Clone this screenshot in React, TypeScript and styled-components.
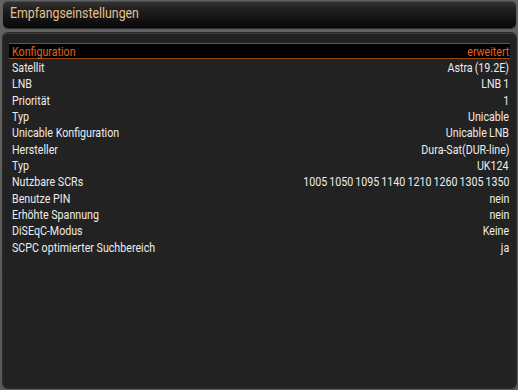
import styled, { createGlobalStyle } from 'styled-components';

const Global = createGlobalStyle`
  html, body {
    margin: 0;
    padding: 0;
    background: #5a5a5a;
  }
  body {
    width: 518px;
    height: 390px;
    overflow: hidden;
    font-family: Roboto, "Liberation Sans", sans-serif;
  }
`;

const Screen = styled.div`
  width: 518px;
  height: 390px;
  box-sizing: border-box;
  padding: 1px 2px 2px 3px;
  display: flex;
  flex-direction: column;
  gap: 5px;
  background: linear-gradient(#626262, #585858);
`;

const TitleBar = styled.div`
  height: 27px;
  border-radius: 5px;
  background: linear-gradient(#353535 0%, #1e1e1e 35%, #080808 100%);
  box-shadow: inset 0 1px 0 #4a4a4a, 0 1px 1px #2a2a2a;
  display: flex;
  align-items: center;
  padding: 0 7px 3px 7px;
  box-sizing: border-box;
`;

const Title = styled.span`
  color: #e9c08c;
  font-size: 14px;
  display: inline-block;
  transform: scaleX(0.88);
  transform-origin: left center;
`;

const Panel = styled.div`
  flex: 1;
  border-radius: 5px;
  background: #222222;
  box-shadow: inset 0 1px 0 #3a3a3a, 0 0 0 1px #2c2c2c;
  padding: 10px 6px 0 6px;
  display: flex;
  flex-direction: column;
`;

const Row = styled.div<{ $active?: boolean }>`
  height: 16.33px;
  box-sizing: border-box;
  display: flex;
  justify-content: space-between;
  align-items: center;
  padding: 0 1px 0 3px;
  font-size: 13px;
  color: ${(p) => (p.$active ? '#e2621c' : '#ececec')};
  background: ${(p) => (p.$active ? '#000000' : 'transparent')};
  border-top: 1px solid ${(p) => (p.$active ? '#9a4610' : 'transparent')};
  border-bottom: 1px solid ${(p) => (p.$active ? '#9a4610' : 'transparent')};
`;

const Label = styled.span`
  white-space: nowrap;
  display: inline-block;
  transform: scaleX(0.82);
  transform-origin: left center;
`;

const Value = styled.span`
  white-space: nowrap;
  word-spacing: -0.7px;
  display: inline-block;
  transform: scaleX(0.82);
  transform-origin: right center;
`;

const rows: [string, string][] = [
  ['Konfiguration', 'erweitert'],
  ['Satellit', 'Astra (19.2E)'],
  ['LNB', 'LNB 1'],
  ['Priorität', '1'],
  ['Typ', 'Unicable'],
  ['Unicable Konfiguration', 'Unicable LNB'],
  ['Hersteller', 'Dura-Sat(DUR-line)'],
  ['Typ', 'UK124'],
  ['Nutzbare SCRs', '1005 1050 1095 1140 1210 1260 1305 1350'],
  ['Benutze PIN', 'nein'],
  ['Erhöhte Spannung', 'nein'],
  ['DiSEqC-Modus', 'Keine'],
  ['SCPC optimierter Suchbereich', 'ja'],
];

export default function App() {
  return (
    <>
      <Global />
      <Screen>
        <TitleBar>
          <Title>Empfangseinstellungen</Title>
        </TitleBar>
        <Panel>
          {rows.map(([k, v], i) => (
            <Row key={i} $active={i === 0}>
              <Label>{k}</Label>
              <Value>{v}</Value>
            </Row>
          ))}
        </Panel>
      </Screen>
    </>
  );
}
